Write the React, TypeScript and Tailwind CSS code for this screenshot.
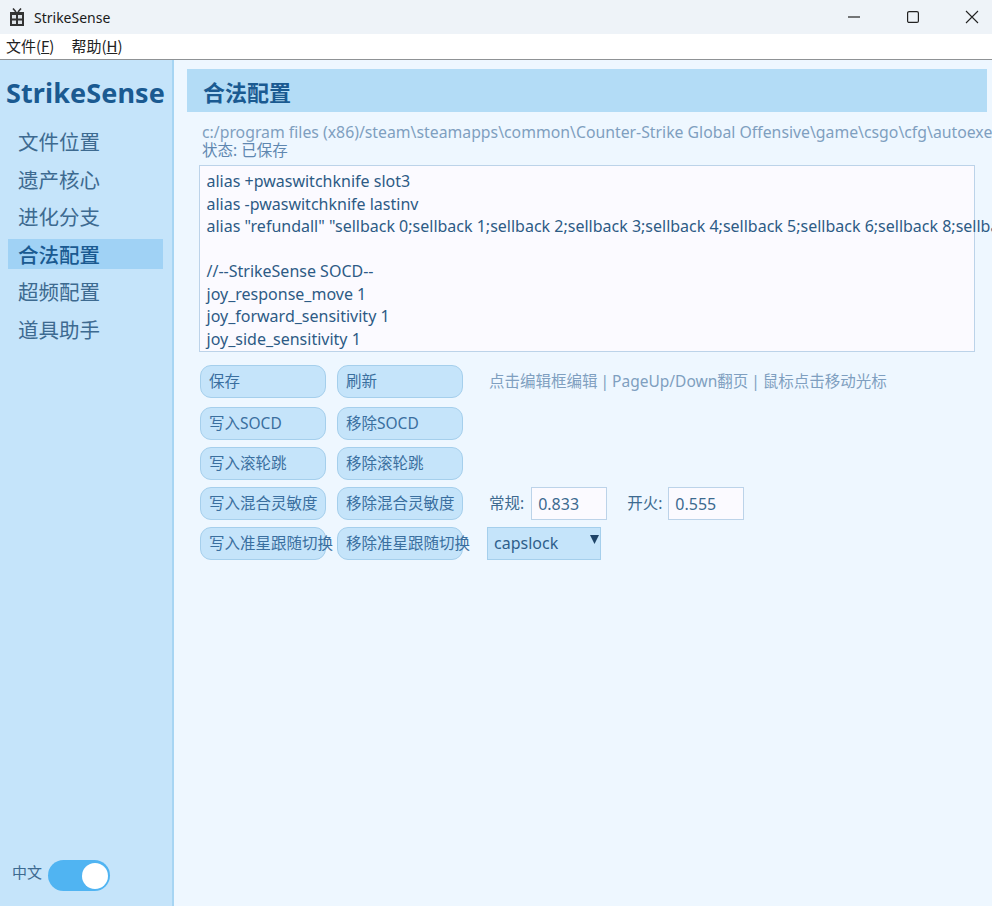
import React from "react";

const nav = ["文件位置", "遗产核心", "进化分支", "合法配置", "超频配置", "道具助手"];
const rows: [string, string][] = [
  ["写入SOCD", "移除SOCD"],
  ["写入滚轮跳", "移除滚轮跳"],
  ["写入混合灵敏度", "移除混合灵敏度"],
  ["写入准星跟随切换", "移除准星跟随切换"],
];
const lines = [
  "alias +pwaswitchknife slot3",
  "alias -pwaswitchknife lastinv",
  'alias "refundall" "sellback 0;sellback 1;sellback 2;sellback 3;sellback 4;sellback 5;sellback 6;sellback 8;sellback 9;sellback 10"',
  "\u00a0",
  "//--StrikeSense SOCD--",
  "joy_response_move 1",
  "joy_forward_sensitivity 1",
  "joy_side_sensitivity 1",
];

function Btn({ label }: { label: string }) {
  return (
    <div className="w-[126px] h-[33px] shrink-0 rounded-[11px] border-[1.5px] border-[#a5cfec] bg-[#c5e4fa] pl-[8px] flex items-center text-[15.5px] text-[#3a6f9f] whitespace-nowrap">
      {label}
    </div>
  );
}

export default function App() {
  return (
    <div className="w-[992px] h-[906px] overflow-hidden flex flex-col bg-[#eef7ff] font-['Noto_Sans','Noto_Sans_CJK_SC',sans-serif]">
      <div className="h-[34px] shrink-0 bg-[#eef3f8] flex items-center">
        <svg className="ml-[10px] w-[14px] h-[18px]" viewBox="0 0 14 18" fill="none">
          <path d="M3 0.5 6 4M11 0.5 8 4" stroke="#333" strokeWidth="1.6" />
          <rect x="0" y="4" width="14" height="14" fill="#333" />
          <path d="M2 7h4v3.5H2zM8 7h4v3.5H8zM2 12.5h4V16H2zM8 12.5h4V16H8z" fill="#dfe4e9" />
        </svg>
        <span className="ml-[10px] text-[14px] text-[#1a1a1a]">StrikeSense</span>
        <div className="ml-auto flex items-center">
          <svg className="w-[14px] h-[14px] mr-[45px]" viewBox="0 0 14 14"><path d="M1 7h12" stroke="#222" strokeWidth="1.2" /></svg>
          <svg className="w-[14px] h-[14px] mr-[45px]" viewBox="0 0 14 14" fill="none"><rect x="1.6" y="1.6" width="10.8" height="10.8" rx="1.5" stroke="#222" strokeWidth="1.2" /></svg>
          <svg className="w-[14px] h-[14px] mr-[13px]" viewBox="0 0 14 14"><path d="M1 1l12 12M13 1 1 13" stroke="#222" strokeWidth="1.1" /></svg>
        </div>
      </div>
      <div className="h-[26px] shrink-0 bg-white border-b border-b-[#8f9295] flex items-center gap-[17px] pl-[6px] text-[15px] text-[#222] font-['Noto_Sans_CJK_SC','Noto_Sans',sans-serif]">
        <span>文件(<span className="underline">F</span>)</span>
        <span>帮助(<span className="underline">H</span>)</span>
      </div>
      <div className="flex-1 flex min-h-0">
        <aside className="w-[174px] shrink-0 bg-[#c5e4fa] border-r-[2px] border-r-[#a7d5f3] flex flex-col">
          <div className="pl-[6px] pt-[13px] h-[66px] text-[27px] leading-[40px] font-bold text-[#1a5a91] tracking-[0.1px] whitespace-nowrap">StrikeSense</div>
          <nav className="flex flex-col gap-[7.5px] pl-[8px]">
            {nav.map((n) => (
              <div
                key={n}
                className={
                  n === "合法配置"
                    ? "w-[155px] h-[30px] pl-[10px] pt-[3px] flex items-center bg-[#a0d2f5] text-[20.5px] font-medium text-[#1a5a91]"
                    : "w-[155px] h-[30px] pl-[10px] pt-[3px] flex items-center text-[20.5px] text-[#3d6a90]"
                }
              >
                {n}
              </div>
            ))}
          </nav>
          <div className="mt-auto mb-[15px] pl-[12px] flex items-center gap-[6px]">
            <span className="text-[15px] text-[#3d6a90] mb-[6px]">中文</span>
            <div className="w-[62px] h-[31px] rounded-full bg-[#50b4f2] flex items-center justify-end pr-[2px]">
              <div className="w-[26px] h-[26px] rounded-full bg-white" />
            </div>
          </div>
        </aside>
        <main className="flex-1 min-w-0 overflow-hidden pt-[9px] pl-[13px] flex flex-col">
          <div className="w-[800px] h-[43px] shrink-0 bg-[#b3dcf6] pl-[16px] pt-[3px] flex items-center text-[22px] font-bold text-[#1a5a91]">合法配置</div>
          <div className="pl-[15px] mt-[11px] text-[15.8px] leading-[19px] text-[#7f9fc0] whitespace-nowrap">
            c:/program files (x86)/steam\steamapps\common\Counter-Strike Global Offensive\game\csgo\cfg\autoexec.cfg
          </div>
          <div className="pl-[15px] text-[15.5px] leading-[17px] text-[#5f87b0]">状态: 已保存</div>
          <div className="ml-[12px] mt-[6px] w-[776px] h-[187px] shrink-0 border-[1.5px] border-[#bcd3e9] bg-[#fbfaff] pl-[6.5px] pt-[4px] text-[16px] leading-[22.5px] text-[#2d5b85] whitespace-nowrap">
            {lines.map((l, i) => (
              <div key={i}>{l}</div>
            ))}
          </div>
          <div className="ml-[13px] mt-[13px] flex items-center">
            <Btn label="保存" />
            <div className="ml-[11px]"><Btn label="刷新" /></div>
            <span className="ml-[26px] text-[15.5px] text-[#7f9fc0] whitespace-nowrap [word-spacing:-1px]">点击编辑框编辑 | PageUp/Down翻页 | 鼠标点击移动光标</span>
          </div>
          <div className="ml-[13px] mt-[9px] flex flex-col gap-[7px]">
            {rows.map(([a, b], i) => (
              <div key={a} className="flex items-center h-[33px]">
                <Btn label={a} />
                <div className="ml-[11px]"><Btn label={b} /></div>
                {i === 2 && (
                  <div className="ml-[26px] flex items-center text-[15.5px] text-[#3d6a90]">
                    <span>常规:</span>
                    <div className="ml-[7px] w-[76px] h-[33px] border-[1.5px] border-[#bcd3e9] bg-[#fbfaff] pl-[6px] flex items-center text-[16px] text-[#3d6a90]">0.833</div>
                    <span className="ml-[20px]">开火:</span>
                    <div className="ml-[6px] w-[76px] h-[33px] border-[1.5px] border-[#bcd3e9] bg-[#fbfaff] pl-[6px] flex items-center text-[16px] text-[#3d6a90]">0.555</div>
                  </div>
                )}
                {i === 3 && (
                  <div className="ml-[24px] relative w-[114px] h-[33px] border-[1.5px] border-[#a5cfec] bg-[#c5e4fa] pl-[6px] pb-[2px] flex items-center text-[16px] text-[#2f5f8b]">
                    capslock
                    <svg className="absolute right-[0px] top-[6px] w-[11px] h-[11px]" viewBox="0 0 11 11"><path d="M1 1h9L5.5 10z" fill="#1f4468" /></svg>
                  </div>
                )}
              </div>
            ))}
          </div>
        </main>
      </div>
    </div>
  );
}
